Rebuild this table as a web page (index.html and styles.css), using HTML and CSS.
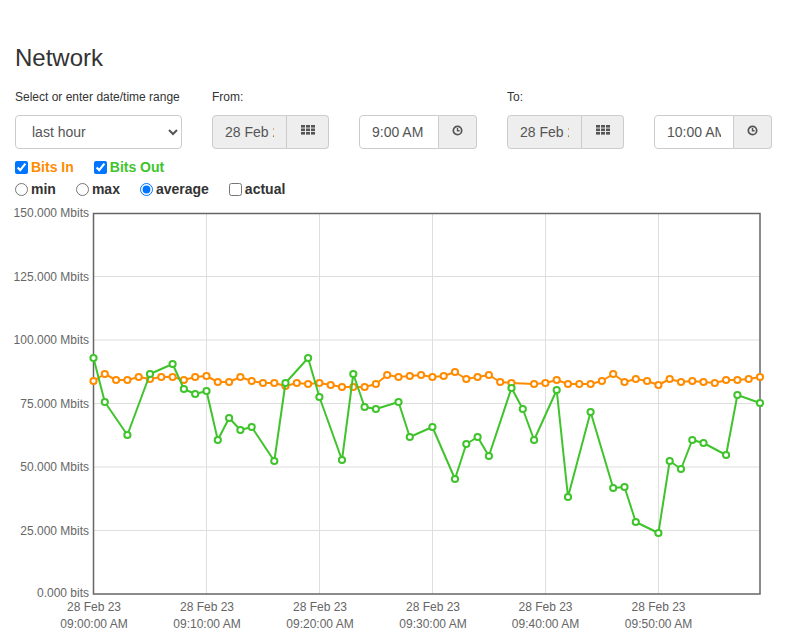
FILE: index.html
```html
<!DOCTYPE html>
<html lang="en">
<head>
<meta charset="utf-8">
<title>Network</title>
<link rel="stylesheet" href="styles.css">
</head>
<body>
<div class="page">
  <h1 class="title">Network</h1>
  <div class="controls">
    <div class="field range-field">
      <label class="field-label">Select or enter date/time range</label>
      <select class="range">
        <option>last hour</option>
      </select>
    </div>
    <div class="field">
      <label class="field-label">From:</label>
      <div class="pair">
        <div class="group">
          <input class="input date" type="text" value="28 Feb 2023" readonly>
          <span class="addon date-addon">
            <svg class="icon-grid" width="14" height="10" viewBox="0 0 14 10"><g fill="#555"><rect x="0" y="0" width="4" height="2.6"/><rect x="5" y="0" width="4" height="2.6"/><rect x="10" y="0" width="4" height="2.6"/><rect x="0" y="3.5" width="4" height="2.6"/><rect x="5" y="3.5" width="4" height="2.6"/><rect x="10" y="3.5" width="4" height="2.6"/><rect x="0" y="7" width="4" height="2.6"/><rect x="5" y="7" width="4" height="2.6"/><rect x="10" y="7" width="4" height="2.6"/></g></svg>
          </span>
        </div>
        <div class="group">
          <input class="input time" type="text" value="9:00 AM">
          <span class="addon time-addon">
            <svg class="icon-clock" width="11" height="11" viewBox="0 0 11 11"><circle cx="5.5" cy="5.5" r="4.2" fill="none" stroke="#555" stroke-width="1.7"/><path d="M5.5 3V5.8H7.6" fill="none" stroke="#555" stroke-width="1.4"/></svg>
          </span>
        </div>
      </div>
    </div>
    <div class="field">
      <label class="field-label">To:</label>
      <div class="pair">
        <div class="group">
          <input class="input date" type="text" value="28 Feb 2023" readonly>
          <span class="addon date-addon">
            <svg class="icon-grid" width="14" height="10" viewBox="0 0 14 10"><g fill="#555"><rect x="0" y="0" width="4" height="2.6"/><rect x="5" y="0" width="4" height="2.6"/><rect x="10" y="0" width="4" height="2.6"/><rect x="0" y="3.5" width="4" height="2.6"/><rect x="5" y="3.5" width="4" height="2.6"/><rect x="10" y="3.5" width="4" height="2.6"/><rect x="0" y="7" width="4" height="2.6"/><rect x="5" y="7" width="4" height="2.6"/><rect x="10" y="7" width="4" height="2.6"/></g></svg>
          </span>
        </div>
        <div class="group">
          <input class="input time" type="text" value="10:00 AM">
          <span class="addon time-addon">
            <svg class="icon-clock" width="11" height="11" viewBox="0 0 11 11"><circle cx="5.5" cy="5.5" r="4.2" fill="none" stroke="#555" stroke-width="1.7"/><path d="M5.5 3V5.8H7.6" fill="none" stroke="#555" stroke-width="1.4"/></svg>
          </span>
        </div>
      </div>
    </div>
  </div>
  <div class="options">
    <div class="opt-row">
      <label class="opt"><input type="checkbox" checked><span class="bits-in">Bits In</span></label>
      <label class="opt"><input type="checkbox" checked><span class="bits-out">Bits Out</span></label>
    </div>
    <div class="opt-row">
      <label class="opt"><input type="radio" name="agg"><span>min</span></label>
      <label class="opt"><input type="radio" name="agg"><span>max</span></label>
      <label class="opt"><input type="radio" name="agg" checked><span>average</span></label>
      <label class="opt"><input type="checkbox"><span>actual</span></label>
    </div>
  </div>
</div>
<svg class="chart" width="787" height="434" viewBox="0 0 787 434">
  <defs>
    <marker id="dot-o" markerUnits="userSpaceOnUse" markerWidth="10" markerHeight="10" refX="5" refY="5" viewBox="0 0 10 10">
      <circle cx="5" cy="5" r="3.1" fill="#fff" stroke="#ff8c00" stroke-width="2"/>
    </marker>
    <marker id="dot-g" markerUnits="userSpaceOnUse" markerWidth="10" markerHeight="10" refX="5" refY="5" viewBox="0 0 10 10">
      <circle cx="5" cy="5" r="3.1" fill="#fff" stroke="#3fc42c" stroke-width="2"/>
    </marker>
  </defs>
  <g transform="translate(0,-200)">
    <g stroke="#dedede" stroke-width="1">
      <line x1="93" y1="276.5" x2="760" y2="276.5"/>
      <line x1="93" y1="340" x2="760" y2="340"/>
      <line x1="93" y1="403.5" x2="760" y2="403.5"/>
      <line x1="93" y1="467" x2="760" y2="467"/>
      <line x1="93" y1="530.5" x2="760" y2="530.5"/>
      <line x1="206.5" y1="213" x2="206.5" y2="594"/>
      <line x1="319.5" y1="213" x2="319.5" y2="594"/>
      <line x1="432.5" y1="213" x2="432.5" y2="594"/>
      <line x1="545.5" y1="213" x2="545.5" y2="594"/>
      <line x1="658.5" y1="213" x2="658.5" y2="594"/>
    </g>
    <rect x="93.5" y="213.5" width="666.5" height="380.5" fill="none" stroke="#666" stroke-width="1.5"/>
    <g class="axis-text" text-anchor="end">
      <text x="89" y="217">150.000 Mbits</text>
      <text x="89" y="280.5">125.000 Mbits</text>
      <text x="89" y="344">100.000 Mbits</text>
      <text x="89" y="407.5">75.000 Mbits</text>
      <text x="89" y="471">50.000 Mbits</text>
      <text x="89" y="534.5">25.000 Mbits</text>
      <text x="89" y="597">0.000 bits</text>
    </g>
    <g class="axis-text" text-anchor="middle">
      <text x="94" y="611">28 Feb 23</text><text x="94" y="628">09:00:00 AM</text>
      <text x="207" y="611">28 Feb 23</text><text x="207" y="628">09:10:00 AM</text>
      <text x="320" y="611">28 Feb 23</text><text x="320" y="628">09:20:00 AM</text>
      <text x="433" y="611">28 Feb 23</text><text x="433" y="628">09:30:00 AM</text>
      <text x="545.5" y="611">28 Feb 23</text><text x="545.5" y="628">09:40:00 AM</text>
      <text x="658.5" y="611">28 Feb 23</text><text x="658.5" y="628">09:50:00 AM</text>
    </g>
    <polyline fill="none" stroke="#ff8c00" stroke-width="2" stroke-linejoin="round" marker-start="url(#dot-o)" marker-mid="url(#dot-o)" marker-end="url(#dot-o)"
      points="93.5,381 104.8,374 116.1,380 127.4,380 138.7,377 150,379 161.3,377 172.6,377 183.9,380 195.2,377 206.5,376 217.8,382 229.1,382 240.4,377 251.7,381 263,383 274.3,383 285.5,386 296.8,383 308.1,384 319.4,383 330.7,385 342,387 353.3,387 364.6,387 375.9,384 387.2,375 398.5,377 409.8,376 421.1,375 432.4,377 443.7,376 455,372 466.3,379 477.6,377 488.9,375 500.2,382 511.5,383 534.1,384 545.4,383 556.7,380 568,384 579.3,384 590.6,384 601.9,381 613.2,374 624.5,382 635.8,379 647.1,381 658.4,385 669.7,379 681,382 692.3,381 703.5,382 714.8,383 726.1,380 737.4,380 748.7,379 760,377"/>
    <polyline fill="none" stroke="#3fc42c" stroke-width="2" stroke-linejoin="round" marker-start="url(#dot-g)" marker-mid="url(#dot-g)" marker-end="url(#dot-g)"
      points="93.5,358 104.8,402 127.4,435 150,374 172.6,364 183.9,389 195.2,394 206.5,391 217.8,440 229.1,418 240.4,430 251.7,427 274.3,461 285.5,383 308.1,358 319.4,397 342,460 353.3,374 364.6,407 375.9,409 398.5,402 409.8,437 432.4,427 455,479 466.3,444 477.6,437 488.9,456 511.5,388 522.8,409 534.1,440 556.7,390 568,497 590.6,412 613.2,488 624.5,487 635.8,522 658.4,533 669.7,461 681,469 692.3,440 703.5,443 726.1,455 737.4,395 760,403"/>
  </g>
</svg>
</body>
</html>
```

FILE: styles.css
```css
html, body {
  margin: 0;
  padding: 0;
  overflow: hidden;
  background: #fff;
}

body {
  font-family: "Liberation Sans", Arial, sans-serif;
  color: #333;
}

.page {
  padding: 44px 15px 0;
}

.title {
  margin: 0;
  font-size: 24px;
  font-weight: normal;
  line-height: 27px;
  color: #333;
}

.controls {
  display: flex;
  gap: 30px;
  margin-top: 18px;
}

.field-label {
  display: block;
  font-size: 12px;
  line-height: 17px;
  margin-bottom: 9px;
  color: #333;
}

.range {
  box-sizing: border-box;
  width: 167px;
  height: 34px;
  padding: 6px 12px;
  font-family: "Liberation Sans", Arial, sans-serif;
  font-size: 14px;
  color: #555;
  background: #fff;
  border: 1px solid #ccc;
  border-radius: 4px;
}

.pair {
  display: flex;
  gap: 30px;
}

.group {
  display: flex;
  height: 34px;
}

.input {
  box-sizing: border-box;
  height: 34px;
  margin: 0;
  padding: 6px 12px;
  font-family: "Liberation Sans", Arial, sans-serif;
  font-size: 14px;
  color: #555;
  background: #fff;
  border: 1px solid #ccc;
  border-radius: 4px 0 0 4px;
  outline: none;
}

.input.date {
  width: 75px;
  background: #eee;
}

.input.time {
  width: 80px;
}

.addon {
  box-sizing: border-box;
  display: flex;
  align-items: center;
  justify-content: center;
  height: 34px;
  background: #eee;
  border: 1px solid #ccc;
  border-left: 0;
  border-radius: 0 4px 4px 0;
}

.date-addon {
  width: 42px;
}

.time-addon {
  width: 38px;
}

.icon-grid {
  display: block;
  margin-bottom: 5px;
}

.icon-clock {
  display: block;
  margin-bottom: 3px;
}

.options {
  margin-top: 7px;
}

.opt-row {
  display: flex;
  height: 22px;
  align-items: center;
  font-size: 14px;
  font-weight: bold;
  line-height: 22px;
  color: #333;
}

.opt {
  display: inline-flex;
  align-items: center;
  margin-right: 20px;
}

.opt input {
  width: 13px;
  height: 13px;
  margin: 0 3px 0 0;
}

.bits-in {
  color: #ff8c00;
}

.bits-out {
  color: #3fc42c;
}

.chart {
  display: block;
  width: 787px;
  height: 434px;
}

.axis-text {
  font-family: "Liberation Sans", Arial, sans-serif;
  font-size: 12px;
  fill: #666;
}
```
